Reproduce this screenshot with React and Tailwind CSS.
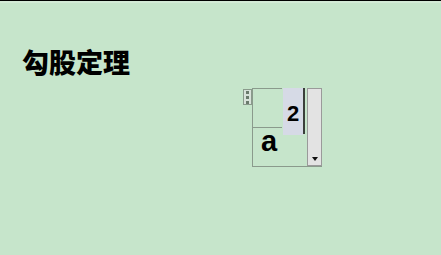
export default function App() {
  return (
    <div className="w-[441px] h-[255px] overflow-hidden bg-[#c6e5cb] border-t border-black">
      <div className="h-[2px] bg-[#d3ead6]" />
      <h1
        className="ml-[22px] mt-[45px] text-[27px] leading-[27px] font-black text-black"
        style={{ fontFamily: '"Noto Sans CJK SC", "Noto Sans", sans-serif' }}
      >
        勾股定理
      </h1>
      <div className="flex items-start ml-[243px] mt-[13px]">
        {/* grip */}
        <div className="mt-[1px] w-[9px] h-[16px] border border-[#8a9a8c] bg-[#d8e2da] flex flex-col items-center justify-center gap-[2px]">
          <span className="w-[3px] h-[3px] bg-[#6a7a6c]" />
          <span className="w-[3px] h-[3px] bg-[#6a7a6c]" />
          <span className="w-[3px] h-[3px] bg-[#6a7a6c]" />
        </div>
        {/* editor box */}
        <div className="flex h-[79px] border-l border-b border-[#8a9a8c]">
          <div className="w-[29px] flex flex-col">
            <div className="h-[40px] border-t border-b border-[#8a9a8c]" />
            <div
              className="pl-[8px] text-[29px] leading-[26px] font-bold text-black"
              style={{ fontFamily: '"Liberation Sans", Arial, sans-serif' }}
            >
              a
            </div>
          </div>
          <div
            className="ml-[1px] w-[20px] h-[47px] bg-[#d6dae6] flex items-end justify-center pb-[12px] text-[22px] leading-[18px] font-bold text-black"
            style={{ fontFamily: '"Liberation Sans", Arial, sans-serif' }}
          >
            2
          </div>
          <div className="w-[2px] h-[46px] bg-[#3a3f3a]" />
          <div className="w-[2px]" />
          <div className="w-[15px] h-[78px] border border-[#9a9a9a] bg-[#e3e3e3] flex flex-col justify-end items-center pb-[4px]">
            <svg width="6" height="4" viewBox="0 0 6 4">
              <path d="M0 0 H6 L3 4 Z" fill="#111" />
            </svg>
          </div>
        </div>
      </div>
    </div>
  );
}
